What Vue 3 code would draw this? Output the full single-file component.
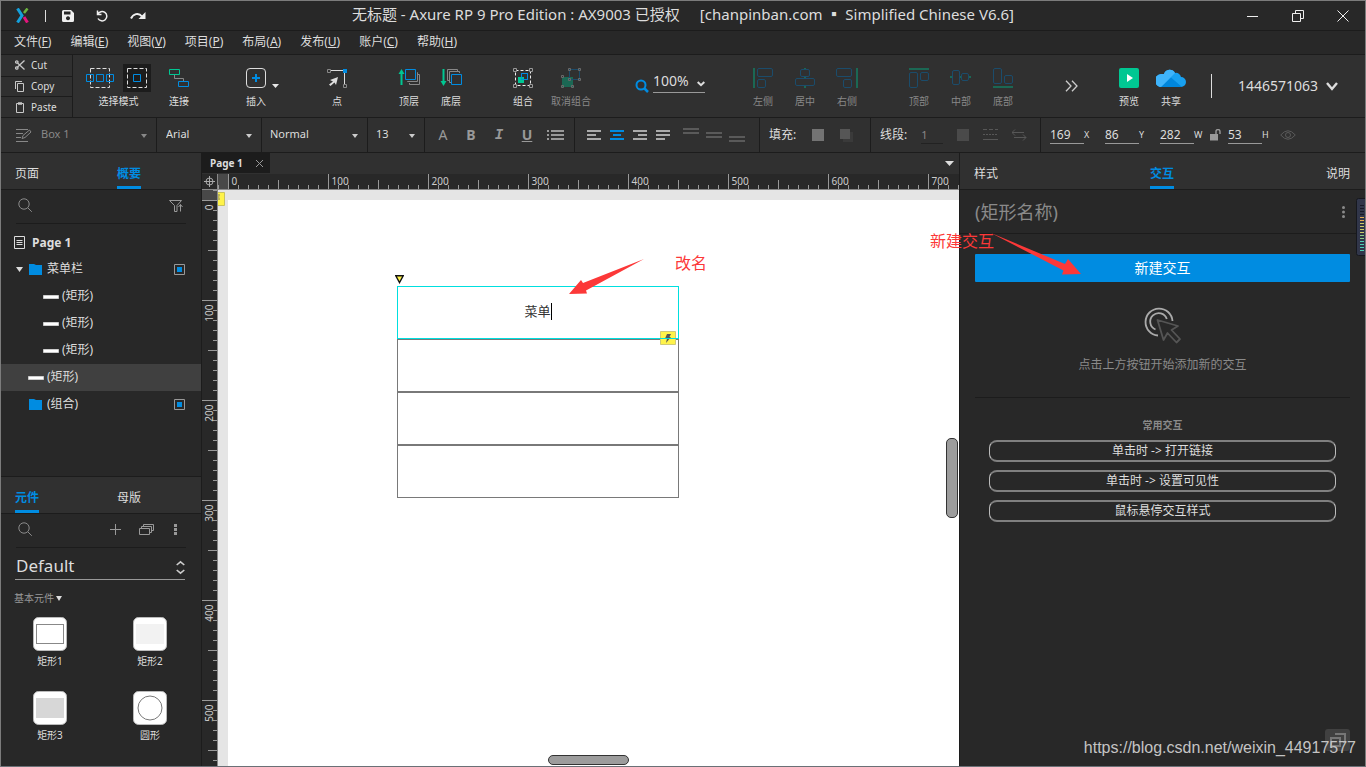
<script setup>
import { computed, onBeforeUnmount, onMounted, ref } from 'vue'

const menus = [
  ['文件', 'F'], ['编辑', 'E'], ['视图', 'V'], ['项目', 'P'],
  ['布局', 'A'], ['发布', 'U'], ['账户', 'C'], ['帮助', 'H']
]

const horizontalAlign = [
  { label: '左侧', bar: 'M1 0v20', boxes: [[4.5, 0.5, 15, 8], [4.5, 11.5, 8, 8]] },
  { label: '居中', bar: 'M10 0v20', boxes: [[5.5, 1.5, 9, 7], [0.5, 10.5, 19, 7]] },
  { label: '右侧', bar: 'M20 0v20', boxes: [[-0.5, 0.5, 15, 8], [6.5, 11.5, 8, 8]] }
]
const verticalAlign = [
  { label: '顶部', bar: 'M0 1h20', boxes: [[0.5, 4.5, 8, 15], [11.5, 4.5, 8, 8]] },
  { label: '中部', bar: 'M-1 9h21', boxes: [[1.5, 2.5, 7, 14], [10.5, 5.5, 7, 7]] },
  { label: '底部', bar: 'M0 19h20', boxes: [[0.5, 0.5, 8, 15], [11.5, 7.5, 8, 8]] }
]

const textAlign = [
  { name: '左对齐', d: 'M0 1h14M0 5h9M0 9h14' },
  { name: '居中对齐', d: 'M0 1h14M3 5h8M0 9h14', on: true },
  { name: '右对齐', d: 'M0 1h14M5 5h9M0 9h14' },
  { name: '两端对齐', d: 'M0 1h14M0 5h14M0 9h9' }
]
const blockAlign = [
  { name: '顶端', d: 'M0 1h16M0 5h16' },
  { name: '居中', d: 'M0 5h16M0 9h16' },
  { name: '底端', d: 'M0 9h16M0 13h16' }
]

const tree = [
  { name: 'Page 1', kind: 'page', depth: 0 },
  { name: '菜单栏', kind: 'folder', depth: 1, open: true, mark: true },
  { name: '(矩形)', kind: 'rect', depth: 2 },
  { name: '(矩形)', kind: 'rect', depth: 2 },
  { name: '(矩形)', kind: 'rect', depth: 2 },
  { name: '(矩形)', kind: 'rect', depth: 1, selected: true },
  { name: '(组合)', kind: 'folder', depth: 1, mark: true }
]

const widgets = [
  { name: '矩形1', kind: 'outline' },
  { name: '矩形2', kind: 'light' },
  { name: '矩形3', kind: 'gray' },
  { name: '圆形', kind: 'circle' }
]

// Ruler marks: one every 10 units, longer at 50, full height with a number at 100.
const stage = ref(null)
const extent = ref({ width: 0, height: 0 })
const ticksFor = (length) =>
  Array.from({ length: Math.max(0, Math.ceil((length - 26) / 10)) }, (_, i) => {
    const value = i * 10
    const size = value % 100 === 0 ? 15 : value % 50 === 0 ? 9 : 4
    return { value, size, pos: value + 10.5 }
  })
const topTicks = computed(() => ticksFor(extent.value.width))
const sideTicks = computed(() => ticksFor(extent.value.height))
const numbered = (ticks, length) => ticks.filter((t) => t.size === 15 && t.pos + 24 < length - 16)

const measure = () => {
  extent.value = { width: stage.value.clientWidth, height: stage.value.clientHeight }
}
onMounted(() => {
  measure()
  window.addEventListener('resize', measure)
})
onBeforeUnmount(() => window.removeEventListener('resize', measure))

const presets = ['单击时 -> 打开链接', '单击时 -> 设置可见性', '鼠标悬停交互样式']
const name = ref('')
const geometry = { x: '169', y: '86', w: '282', h: '53' }
</script>

<template>
  <div class="window">
    <header class="titlebar">
      <div class="quick">
        <svg class="logo" width="13" height="15" viewBox="0 0 13 15" fill="none" stroke-width="3">
          <path d="M1.500.5L6 7.500L1.500 14.500" stroke="#14a0dc" />
          <path d="M8 5L11.500.5" stroke="#6cb33f" stroke-width="2.600" />
          <path d="M8 9L11.500 14.500" stroke="#e4157d" />
        </svg>
        <span class="bar"></span>
        <button class="save" aria-label="保存">
          <svg width="12" height="12" viewBox="0 0 12 12"><path fill="#efefef" fill-rule="evenodd" d="M1.500 0H9l3 3v7.500A1.500 1.500 0 0 1 10.500 12h-9A1.500 1.500 0 0 1 0 10.500v-9A1.500 1.500 0 0 1 1.500 0zM2 1.500v3h6.500v-3zM6 6.200a2 2 0 1 0 .01 0z" /></svg>
        </button>
        <button class="undo" aria-label="撤销">
          <svg width="13" height="12" viewBox="0 0 13 12" fill="none" stroke="#efefef" stroke-width="1.500"><path d="M1.500.5v4h4M1.800 4.300A4.700 4.700 0 1 1 2 8.500" /></svg>
        </button>
        <button class="redo" aria-label="重做">
          <svg width="16" height="9" viewBox="0 0 16 9"><path d="M1 7.500C3 3 8.500 1 12 5.500" fill="none" stroke="#efefef" stroke-width="2" /><path d="M15.500 1v7H8.500z" fill="#efefef" /></svg>
        </button>
      </div>
      <h1 class="title">无标题 - Axure RP 9 Pro Edition : AX9003 已授权<span class="vendor">[chanpinban.com ▪ Simplified Chinese V6.6]</span></h1>
      <div class="controls">
        <button aria-label="最小化"><svg width="12" height="12" viewBox="0 0 12 12"><path d="M0 6.500h11" stroke="#eee" /></svg></button>
        <button aria-label="还原"><svg width="12" height="12" viewBox="0 0 12 12" fill="none" stroke="#eee"><path d="M.5 3.500h8v8h-8zM3.500 3V.5h8v8H9" /></svg></button>
        <button aria-label="关闭"><svg width="12" height="12" viewBox="0 0 12 12"><path d="M.5.5l11 11M11.500.5l-11 11" stroke="#eee" /></svg></button>
      </div>
    </header>

    <nav class="menu">
      <button v-for="m in menus" :key="m[1]">{{ m[0] }}(<u>{{ m[1] }}</u>)</button>
    </nav>

    <div class="toolbar">
      <div class="clipboard">
        <button><svg width="10" height="10" viewBox="0 0 10 10" fill="none" stroke="#c8c8c8" stroke-width="1.300"><path d="M2.500 3L9.500 9.500M2.500 7L9.500.5" /><circle cx="1.800" cy="2" r="1.200" /><circle cx="1.800" cy="8" r="1.200" /></svg>Cut</button>
        <button><svg width="10" height="11" viewBox="0 0 10 11" fill="none" stroke="#c8c8c8"><path d="M2.500 2.500h6v8h-6zM.5 8V.5H7" /></svg>Copy</button>
        <button><svg width="10" height="11" viewBox="0 0 10 11" fill="none" stroke="#c8c8c8"><path d="M1.500 1.500h7v9h-7z" /><path d="M3 1.500h4" stroke-width="2.500" /></svg>Paste</button>
      </div>

      <div class="tool modes">
        <span class="icons">
          <svg width="28" height="28" viewBox="0 0 28 28" fill="none"><path d="M4.500 4.500h19v19h-19z" stroke="#ddd" stroke-dasharray="4 2" /><path d="M.5 10.500h7v7h-7zM10.500 10.500h7v7h-7zM20.500 10.500h7v7h-7z" stroke="#008ce1" /></svg>
          <svg class="active" width="28" height="28" viewBox="0 0 28 28" fill="none"><path d="M4.500 4.500h19v19h-19z" stroke="#ddd" stroke-dasharray="4 2" /><path d="M10.500 10.500h7v7h-7z" stroke="#008ce1" /></svg>
        </span>
        <span>选择模式</span>
      </div>
      <button class="tool connect">
        <svg width="20" height="20" viewBox="0 0 20 20" fill="none"><path d="M5.500 7v3.500h9v3" stroke="#888" /><path d="M.5 1.500h10v5H.5z" stroke="#00c792" /><path d="M9.500 13.500h10v5h-10z" stroke="#008ce1" /></svg>连接
      </button>
      <button class="tool insert">
        <svg width="20" height="20" viewBox="0 0 20 20" fill="none"><rect x=".5" y=".5" width="19" height="19" rx="3.500" stroke="#ddd" /><path d="M10 6v8M6 10h8" stroke="#008ce1" stroke-width="2" /></svg>插入
      </button>
      <svg class="insert-caret" width="8" height="4" viewBox="0 0 8 4"><path d="M0 0h7L3.500 4z" fill="#e8e8e8" /></svg>
      <button class="tool point">
        <svg width="20" height="20" viewBox="0 0 20 20" fill="none"><path d="M4 2.500h12M17.500 4v12" stroke="#ddd" /><path d="M.5 1.500h3v3h-3zM16.500 16.500h3v3h-3z" stroke="#888" /><path d="M16 1h4v4h-4z" fill="#008ce1" /><path d="M11 9L3 12l3 1.500-4 3 1.500 1.500 4-3.500L9 17z" fill="#ddd" /></svg>点
      </button>
      <button class="tool front">
        <svg width="22" height="20" viewBox="0 0 22 20" fill="none"><path d="M3.500 4v13" stroke="#00c792" stroke-width="2" /><path d="M.5 6L3.500 1l3 5z" fill="#00c792" /><path d="M19 4.500h.5v9h-10V13M20 6.500h1.500v10h-10V15" stroke="#888" /><path d="M7.500 1.500h10v10h-10z" stroke="#008ce1" /></svg>顶层
      </button>
      <button class="tool">
        <svg width="22" height="20" viewBox="0 0 22 20" fill="none"><path d="M3.500 1v13" stroke="#00c792" stroke-width="2" /><path d="M.5 13L3.500 18l3-5z" fill="#00c792" /><path d="M9 12.500H7.500v-11h10V3M11 14.500H9.500v-11h10V5" stroke="#888" /><path d="M11.500 6.500h10v10h-10z" stroke="#008ce1" /></svg>底层
      </button>
      <button class="tool group">
        <svg width="20" height="20" viewBox="0 0 20 20" fill="none"><path d="M2.500 2.500h15v15h-15z" stroke="#eee" stroke-dasharray="3 2" /><path d="M5 9h6v6H5z" fill="#00c792" /><path d="M8.500 5.500h6v6h-6z" fill="#303030" stroke="#008ce1" /><path d="M5 9h6v2.500H5z" fill="#00c792" /><path d="M8.500 5.500h6v6h-6z" stroke="#008ce1" /><path d="M.5.500h3v3h-3zM16.500.500h3v3h-3zM.5 16.500h3v3h-3zM16.500 16.500h3v3h-3z" fill="#303030" stroke="#999" /></svg>组合
      </button>
      <button class="tool ungroup dim">
        <svg width="20" height="20" viewBox="0 0 20 20" fill="none"><path d="M1 9h11v10H1z" fill="#1b6854" /><path d="M8.500 1.500h10v10h-10z" stroke="#1b4c6b" /><path d="M7.500.5h2v2h-2zM17.500.500h2v2h-2zM17.500 10.500h2v2h-2zM.5 7.500h2v2h-2zM.5 17.500h2v2h-2zM10.500 17.500h2v2h-2zM7.500 10.500h2v2h-2z" stroke="#6a6a6a" /></svg>取消组合
      </button>

      <div class="zoom">
        <svg width="14" height="14" viewBox="0 0 14 14" fill="none" stroke="#008ce1" stroke-width="2"><circle cx="6" cy="6" r="4.500" /><path d="M9 9l4 4" stroke-width="2.500" /></svg>
        <button class="zoom-value">100%<svg width="8" height="6" viewBox="0 0 8 6" fill="none" stroke="#ddd" stroke-width="2"><path d="M.7 1L4 4.200 7.300 1" /></svg></button>
      </div>

      <div v-for="(set, i) in [horizontalAlign, verticalAlign]" :key="i" class="aligns">
        <button v-for="a in set" :key="a.label" class="tool dim">
          <svg width="22" height="20" viewBox="-1 0 22 20" fill="none"><path :d="a.bar" stroke="#1b6854" stroke-width="2" /><rect v-for="(b, n) in a.boxes" :key="n" :x="b[0]" :y="b[1]" :width="b[2]" :height="b[3]" rx="1.500" fill="#303030" stroke="#1b4c6b" /></svg>{{ a.label }}
        </button>
      </div>

      <button class="more" aria-label="更多"><svg width="13" height="12" viewBox="0 0 13 12" fill="none" stroke="#ccc" stroke-width="1.300"><path d="M1 .7l5 5.300-5 5.300M7 .7l5 5.300-5 5.300" /></svg></button>
      <div class="session">
        <button class="tool">
          <svg width="20" height="20" viewBox="0 0 20 20"><rect width="20" height="20" rx="2" fill="#00c792" /><path d="M8 6l6 4-6 4z" fill="#fff" /></svg>预览
        </button>
        <button class="tool">
          <svg width="30" height="20" viewBox="0 0 30 20"><path d="M6 19a6 6 0 0 1-1-13h3a6 6 0 0 1 11-1 5 5 0 0 1 6 4 5 5 0 0 1 0 10z" fill="#18a0f0" /><path d="M6 19a6 6 0 0 1-1-13h3a6 6 0 0 1 11-1L14 10z" fill="#3fb4fb" /><path d="M5 19L15 9.500 26 19z" fill="#0086dc" /></svg>共享
        </button>
        <span class="divider"></span>
        <button class="account">1446571063<svg width="12" height="9" viewBox="0 0 12 9" fill="none" stroke="#ddd" stroke-width="2.400"><path d="M1 1l5 6 5-6" /></svg></button>
      </div>
    </div>

    <div class="stylebar">
      <div class="cell preset">
        <svg width="16" height="13" viewBox="0 0 16 13" fill="none" stroke="#888"><path d="M0 .5h12M0 4.500h7M0 8.500h5M0 12.500h12M6 9.500l1-3 6.500-5.500 1.500 2L9 8.500z" /></svg>
        <select aria-label="样式"><option>Box 1</option></select>
      </div>
      <div class="cell family"><select aria-label="字体"><option>Arial</option></select></div>
      <div class="cell weight"><select aria-label="字重"><option>Normal</option></select></div>
      <div class="cell size"><select aria-label="字号"><option>13</option></select></div>
      <div class="cell format">
        <button>A</button><button class="b">B</button><button class="i">I</button><button class="u">U</button>
        <button aria-label="项目符号"><svg width="17" height="12" viewBox="0 0 17 12" stroke="#999" stroke-width="2"><path d="M0 2h2M0 6h2M0 10h2M4 2h13M4 6h13M4 10h13" /></svg></button>
      </div>
      <div class="cell alignment">
        <button v-for="a in textAlign" :key="a.name" :class="{ on: a.on }" :aria-label="a.name"><svg width="14" height="10" viewBox="0 0 14 10" stroke="currentColor" stroke-width="2"><path :d="a.d" /></svg></button>
        <span class="vertical">
          <button v-for="a in blockAlign" :key="a.name" :aria-label="a.name"><svg width="16" height="14" viewBox="0 0 16 14" stroke="#5a5a5a" stroke-width="2"><path :d="a.d" /></svg></button>
        </span>
      </div>
      <div class="cell fill">
        <span>填充:</span>
        <svg width="12" height="12"><rect width="12" height="12" fill="#737373" /></svg>
        <svg width="13" height="13"><path d="M3 3h10v10H3z" fill="#3a3a3a" /><path d="M0 0h10v10H0z" fill="#565656" /></svg>
      </div>
      <div class="cell line">
        <span>线段:</span>
        <input aria-label="线宽" value="1" disabled />
        <svg width="12" height="12"><rect width="12" height="12" fill="#4a4a4a" /></svg>
        <svg width="15" height="12" viewBox="0 0 15 12" stroke="#575757"><path d="M0 .5h15" stroke-dasharray="4 2" /><path d="M0 5.500h15" stroke-dasharray="2 1" /><path d="M0 10.500h15" /></svg>
        <svg width="15" height="12" viewBox="0 0 15 12" fill="none" stroke="#575757"><path d="M0 3.500h12M3 .5l-3 3 3 3M2 8.500h12M11 5.500l3 3-3 3" /></svg>
      </div>
      <div class="cell geometry">
        <label><input :value="geometry.x" />X</label>
        <label><input :value="geometry.y" />Y</label>
        <label class="w"><input :value="geometry.w" />W</label>
        <svg class="lock" width="11" height="12" viewBox="0 0 11 12"><path d="M0 5h8v6.500H0z" fill="#999" /><path d="M6 5V2.500a2 2 0 0 1 4 0V5" fill="none" stroke="#999" stroke-width="1.400" /></svg>
        <label class="h"><input :value="geometry.h" />H</label>
        <svg width="16" height="10" viewBox="0 0 16 10" fill="none" stroke="#5a5a5a"><path d="M.7 5Q8-3.500 15.300 5 8 13.500.7 5z" /><circle cx="8" cy="5" r="2.500" /></svg>
      </div>
    </div>

    <main class="workspace">
      <aside class="left">
        <section class="outline">
          <div class="tabs"><button>页面</button><button class="on">概要</button></div>
          <div class="search">
            <svg width="15" height="15" viewBox="0 0 15 15" fill="none" stroke="#8a8a8a"><circle cx="6" cy="6" r="5.200" /><path d="M9.800 9.800l4 4" /></svg>
            <svg class="end" width="14" height="12" viewBox="0 0 14 12" fill="none" stroke="#999"><path d="M.5.500h12L8 5.500v6H5.500v-6zM11.500 11.500V4.500M9.500 7l2-2.500 2 2.500" /></svg>
          </div>
          <ul class="tree">
            <li v-for="(n, i) in tree" :key="i" :class="['depth' + n.depth, n.kind, { selected: n.selected }]">
              <span class="toggle"><svg v-if="n.open" width="7" height="5" viewBox="0 0 7 5"><path d="M0 0h7L3.500 5z" fill="#ddd" /></svg></span>
              <svg v-if="n.kind === 'page'" width="11" height="13" viewBox="0 0 11 13" fill="none" stroke="#ddd"><path d="M.5.500h10v12H.5zM2.500 4.500h6M2.500 6.500h6M2.500 8.500h6" /></svg>
              <svg v-else-if="n.kind === 'folder'" width="13" height="11" viewBox="0 0 13 11"><path d="M0 0h5l2 1h6v10H0z" fill="#008ce1" /></svg>
              <svg v-else width="16" height="4" viewBox="0 0 16 4"><path d="M.5.500h15v3H.5z" fill="#fff" stroke="#ccc" /></svg>
              <span class="label">{{ n.name }}</span>
              <svg v-if="n.mark" class="end" width="11" height="11" viewBox="0 0 11 11"><path d="M.5.500h10v10H.5z" fill="none" stroke="#999" /><path d="M3 3h5v5H3z" fill="#008ce1" /></svg>
            </li>
          </ul>
        </section>
        <section class="library">
          <div class="tabs"><button class="on">元件</button><button>母版</button></div>
          <div class="search">
            <svg width="15" height="15" viewBox="0 0 15 15" fill="none" stroke="#8a8a8a"><circle cx="6" cy="6" r="5.200" /><path d="M9.800 9.800l4 4" /></svg>
            <svg class="end" width="11" height="11" viewBox="0 0 11 11" stroke="#999"><path d="M5.500 0v11M0 5.500h11" /></svg>
            <svg class="stack" width="15" height="12" viewBox="0 0 15 12" fill="none" stroke="#999"><path d="M.5 4.500h10v6H.5zM2.500 4V2.500h10v6H11M4.500 2V.5h10v6H13" /></svg>
            <svg class="dots" width="3" height="11" fill="#999"><path d="M0 0h3v3H0zM0 4h3v3H0zM0 8h3v3H0z" /></svg>
          </div>
          <button class="choose">Default<svg width="9" height="15" viewBox="0 0 9 15" fill="none" stroke="#ccc" stroke-width="1.600"><path d="M.7 5L4.500 1.900 8.300 5M.7 10l3.800 3.100L8.300 10" /></svg></button>
          <button class="category">基本元件<svg width="6" height="5"><path d="M0 0h6L3 5z" fill="#ddd" /></svg></button>
          <div class="widgets">
            <button v-for="w in widgets" :key="w.name">
              <svg width="34" height="34" viewBox="0 0 34 34">
                <rect x=".5" y=".5" width="33" height="33" rx="5" fill="#fff" stroke="#bbb" />
                <rect v-if="w.kind === 'outline'" x="3.500" y="7.500" width="27" height="19" fill="#fff" stroke="#888" />
                <rect v-if="w.kind === 'light'" x="3" y="7" width="28" height="20" fill="#f2f2f2" />
                <rect v-if="w.kind === 'gray'" x="3" y="7" width="28" height="20" fill="#d7d7d7" />
                <circle v-if="w.kind === 'circle'" cx="17" cy="17" r="12" fill="#fff" stroke="#797979" />
              </svg>
              {{ w.name }}
            </button>
          </div>
        </section>
      </aside>

      <section class="center">
        <div class="pages">
          <div class="page-tab">Page 1<button aria-label="关闭页面"><svg width="7" height="7" viewBox="0 0 7 7"><path d="M0 0l7 7M7 0L0 7" stroke="#999" /></svg></button></div>
          <svg width="9" height="5" viewBox="0 0 9 5"><path d="M0 0h9L4.500 5z" fill="#ddd" /></svg>
        </div>
        <div ref="stage" class="stage">
          <div class="corner"><svg width="11" height="11" viewBox="0 0 11 11" fill="none" stroke="#aaa"><circle cx="5.500" cy="5.500" r="3.500" /><path d="M5.500 0v11M0 5.500h11" /></svg></div>
          <svg class="ruler top">
            <rect width="10" height="15" fill="#484848" />
            <path d="M.5 11v4" stroke="#999" />
            <path v-for="t in topTicks" :key="t.value" :d="`M${t.pos} ${15 - t.size}v${t.size}`" stroke="#999" />
            <text v-for="t in numbered(topTicks, extent.width)" :key="t.value" :x="t.pos + 3" y="11">{{ t.value }}</text>
          </svg>
          <svg class="ruler side">
            <rect width="15" height="10" fill="#484848" />
            <path d="M11 .5h4" stroke="#999" />
            <path v-for="t in sideTicks" :key="t.value" :d="`M${15 - t.size} ${t.pos}h${t.size}`" stroke="#999" />
            <text v-for="t in numbered(sideTicks, extent.height)" :key="t.value" :transform="`translate(11 ${t.pos + 4}) rotate(-90)`" text-anchor="end">{{ t.value }}</text>
          </svg>
          <div class="canvas">
            <div class="paper"></div>
            <svg class="flag" width="7" height="14" viewBox="0 0 7 14"><path d="M-1 .5h7.500v13H-1z" fill="#fff34a" stroke="#c9c35e" /><path d="M0 3h2M0 5h1.500M0 7h2" stroke="#776" /></svg>
            <svg class="marker" width="9" height="9" viewBox="0 0 9 9"><path d="M.8.8h7.400L4.500 7.500z" fill="#fff34a" stroke="#111" stroke-width="1.400" /></svg>
            <div class="shapes">
              <div class="shape editing">菜单<i></i></div>
              <div class="shape"></div>
              <div class="shape"></div>
              <div class="shape"></div>
              <svg class="bolt" width="16" height="14" viewBox="0 0 16 14"><path d="M.5.500h15v13H.5z" fill="#fff34a" stroke="#d0ca77" /><path d="M7 3h4L9.500 6H11l-5 6 1-4.500H5z" fill="#555" /><path d="M0 7.500h16" stroke="#00dfdf" /></svg>
            </div>
            <span class="thumb vertical-thumb"></span>
            <span class="thumb horizontal-thumb"></span>
          </div>
        </div>
      </section>

      <aside class="right">
        <div class="tabs spread"><button>样式</button><button class="on">交互</button><button>说明</button></div>
        <div class="name-row">
          <input v-model="name" aria-label="名称" placeholder="(矩形名称)" />
          <svg width="3" height="12" fill="#8a8a8a"><circle cx="1.500" cy="1.500" r="1.500" /><circle cx="1.500" cy="6" r="1.500" /><circle cx="1.500" cy="10.500" r="1.500" /></svg>
        </div>
        <div class="interactions">
          <button class="create">新建交互</button>
          <svg class="click" width="38" height="37" viewBox="0 0 38 37" fill="none" stroke-width="1.800"><path d="M14 28.500A13.500 13.500 0 1 1 28.500 14" stroke="#aaa" /><path d="M11.500 22.500A8.500 8.500 0 1 1 22.800 12" stroke="#aaa" /><path d="M13.500 13l6 20 4-7 9 9.500 3.500-3.500-8.500-9 6.500-4z" stroke="#555" stroke-linejoin="round" /></svg>
          <p>点击上方按钮开始添加新的交互</p>
          <hr />
          <h2>常用交互</h2>
          <div class="presets"><button v-for="p in presets" :key="p">{{ p }}</button></div>
        </div>
        <button class="pop" aria-label="弹出面板"><svg width="16" height="15" viewBox="0 0 16 15" fill="none" stroke="#777" stroke-width="2"><path d="M1 5h9v8H1zM5 1h10v8h-2" /></svg></button>
      </aside>

      <div class="notes">
        <svg class="arrow rename" width="75" height="36" viewBox="0 0 75 36"><path d="M0 35L12 21l2 3L75 0 17 31.500l1 3z" fill="#fc3838" /></svg>
        <span class="note rename-note">改名</span>
        <svg class="arrow create-arrow" width="91" height="43" viewBox="0 0 91 43"><path d="M0 0L74 31l3-5 13 15-19 .5 1.500-4z" fill="#fc3838" /></svg>
        <span class="note create-note">新建交互</span>
        <svg class="meter" width="10" height="58" viewBox="0 0 10 58"><rect x=".5" y=".5" width="12" height="57" rx="2" fill="#31364a" stroke="#16181e" /><path d="M4 7.500h4M4 10.500h4M4 13.500h4M4 16.500h4" stroke="#171a26" /><path d="M4 19.500h4M4 22.500h4" stroke="#e5ac50" /><path d="M4 25.500h4M4 28.500h4M4 31.500h4M4 34.500h4" stroke="#cfca6a" /><path d="M4 37.500h4M4 40.500h4" stroke="#8fcc88" /><path d="M4 43.500h4M4 46.500h4M4 49.500h4M4 52.500h4" stroke="#4fceb5" /></svg>
        <span class="watermark">https://blog.csdn.net/weixin_44917577</span>
      </div>
    </main>
  </div>
</template>

<style>
html, body { margin: 0; background: #282828; }
</style>

<style scoped>
.window {
  box-sizing: border-box;
  min-height: 100vh;
  display: flex;
  flex-direction: column;
  overflow: hidden;
  border: 1px solid #7c7c7c;
  border-bottom-color: #6a7076;
  background: #282828;
  color: #ddd;
  font: 12px/16px "Noto Sans", "Noto Sans CJK SC", sans-serif;
}
.window * { box-sizing: border-box; }
svg { flex: none; display: block; }
button, input, select { margin: 0; padding: 0; border: 0; background: none; color: inherit; font: inherit; border-radius: 0; }
h1, h2, p, ul { margin: 0; padding: 0; font-weight: normal; list-style: none; }

.titlebar { display: grid; grid-template-columns: 1fr auto 1fr; align-items: center; height: 30px; border-bottom: 1px solid #1c1c1c; }
.quick { display: flex; align-items: center; padding-left: 15px; }
.bar { width: 1px; height: 12px; margin: 0 16px; background: #ddd; }
.undo { margin-left: 22px; }
.redo { margin-left: 21px; }
.title { font-size: 15px; line-height: 24px; padding-bottom: 4px; white-space: nowrap; }
.vendor { margin-left: 20px; }
.controls { display: flex; justify-content: flex-end; gap: 33px; padding-right: 16px; }

.menu { display: flex; align-items: center; gap: 19px; height: 24px; padding: 0 0 2px 13px; border-bottom: 1px solid #1c1c1c; }

.toolbar { display: flex; height: 63px; background: #303030; border-bottom: 1px solid #1c1c1c; }
.clipboard { display: grid; grid-template-rows: repeat(3, 1fr); width: 72px; border-right: 1px solid #1c1c1c; font-size: 10px; }
.clipboard button { display: flex; align-items: center; gap: 6px; padding-left: 14px; }
.clipboard button + button { border-top: 1px solid #1c1c1c; }
.tool { display: flex; flex-direction: column; align-items: center; flex: none; gap: 6px; width: 42px; padding-top: 13px; font-size: 10px; line-height: 14px; white-space: nowrap; }
.modes { width: 65px; margin-left: 13px; padding-top: 9px; gap: 2px; }
.icons { display: flex; justify-content: space-between; width: 100%; }
.active { background: #1c1c1c; }
.connect { margin-left: 7px; }
.insert { margin-left: 35px; }
.insert-caret { align-self: center; margin-left: -5px; }
.point { margin-left: 36px; }
.front { margin-left: 30px; }
.group { margin-left: 30px; }
.ungroup { margin-left: 6px; }
.dim { color: #888; }
.zoom { display: flex; align-items: flex-end; gap: 4px; margin-left: 43px; padding-bottom: 24px; }
.zoom-value { display: flex; align-items: center; justify-content: space-between; width: 52px; height: 24px; border-bottom: 1px solid #999; font-size: 14px; }
.zoom-value svg { margin-top: 6px; }
.aligns { display: flex; margin-left: 37px; }
.aligns + .aligns { margin-left: 30px; }
.more { margin-left: 41px; }
.session { display: flex; margin-left: auto; padding-right: 27px; }
.divider { align-self: center; width: 1px; height: 24px; margin: 0 26px 0 19px; background: #ddd; }
.account { display: flex; align-items: center; gap: 8px; font-size: 14px; }

.stylebar { display: flex; height: 35px; background: #303030; border-bottom: 1px solid #1c1c1c; font-size: 11px; }
.cell { display: flex; align-items: center; flex: none; border-right: 1px solid #1c1c1c; }
.cell select { flex: 1; min-width: 0; height: 24px; padding-bottom: 2px; appearance: none; outline: none; }
.preset, .family, .weight, .size { position: relative; }
.preset::after, .family::after, .weight::after, .size::after {
  content: ""; position: absolute; right: 9px; top: 16px; border: 3px solid transparent; border-top: 4px solid #ccc; border-bottom: 0; pointer-events: none;
}
.preset { width: 156px; padding-left: 15px; gap: 9px; color: #888; }
.preset::after { border-top-color: #888; }
.family { width: 105px; padding-left: 9px; }
.weight { width: 106px; padding-left: 8px; }
.size { width: 57px; padding-left: 8px; }
.format { width: 150px; padding-left: 4px; color: #999; font-size: 14px; }
.format button { flex: none; width: 28px; display: flex; align-items: center; justify-content: center; }
.b { font-weight: bold; }
.i { font-family: "Liberation Mono", monospace; font-style: italic; font-weight: bold; }
.u { text-decoration: underline; font-weight: bold; }
.alignment { width: 185px; padding-left: 12px; gap: 9px; color: #aaa; }
.on { color: #008ce1; }
.vertical { display: flex; gap: 7px; margin-left: 4px; }
.fill { width: 111px; padding-left: 9px; gap: 16px; font-size: 12px; }
.line { width: 170px; padding-left: 9px; gap: 14px; font-size: 12px; }
.line input { width: 22px; color: #888; font-size: 11px; border-bottom: 1px solid #222; }
.geometry { flex: 1; padding-left: 9px; border-right: 0; }
.geometry label { display: flex; align-items: center; width: 55px; font-size: 9px; }
.geometry .w { width: 50px; }
.geometry .h { width: 52px; }
.geometry input { width: 34px; border-bottom: 1px solid #999; font-size: 12px; }
.lock { margin-right: 7px; }

.workspace { position: relative; display: flex; flex: 1; min-height: 0; }
.left { display: flex; flex-direction: column; flex: none; width: 201px; border-right: 1px solid #1c1c1c; }
.outline { flex: 1; }
.tabs { display: grid; grid-template-columns: 100px 1fr; column-gap: 2px; justify-items: start; height: 37px; padding-left: 14px; background: #303030; border-bottom: 1px solid #1c1c1c; }
.tabs button { border-top: 3px solid transparent; border-bottom: 3px solid transparent; padding-top: 6px; }
.tabs .on { border-bottom-color: #008ce1; font-weight: bold; }
.spread { display: flex; justify-content: space-between; padding: 0 15px 0 14px; }
.search { display: flex; align-items: center; height: 34px; margin: 0 15px; padding: 0 3px 2px 2px; border-bottom: 1px solid #1c1c1c; }
.end { margin-left: auto; }
.stack { margin-left: 18px; }
.dots { margin: 0 6px 0 20px; }
.tree { padding-top: 5px; }
.tree li { display: flex; align-items: center; height: 27px; padding-right: 16px; }
.toggle { flex: none; width: 28px; padding-left: 15px; }
.tree .page { padding-left: 13px; font-weight: bold; }
.page .toggle { display: none; }
.page .label { margin-left: 7px; padding-bottom: 0; }
.label { margin-left: 5px; padding-bottom: 1px; }
.tree .rect .label { margin-left: 3px; }
.rect .toggle { width: 27px; }
.tree .rect.depth2 { padding-left: 15px; }
.selected { background: #404040; }
.library { border-top: 1px solid #1c1c1c; height: 290px; }
.choose { display: flex; align-items: flex-end; justify-content: space-between; width: 170px; height: 32px; margin-left: 14px; padding: 0 0 1px 1px; border-bottom: 1px solid #999; font-size: 17px; line-height: 24px; }
.choose svg { margin-bottom: 3px; }
.category { display: flex; align-items: center; gap: 2px; margin: 10px 0 0 13px; color: #999; font-size: 10px; }
.widgets { display: grid; grid-template-columns: 98px 102px; grid-auto-rows: 74px; margin-top: 11px; }
.widgets button { display: flex; flex-direction: column; align-items: center; gap: 2px; font-size: 10px; }

.center { display: flex; flex-direction: column; flex: 1; min-width: 0; }
.pages { display: flex; align-items: center; justify-content: space-between; height: 21px; padding-right: 5px; background: #303030; }
.page-tab { display: flex; align-items: center; justify-content: space-between; width: 68px; height: 20px; padding: 0 7px 0 8px; align-self: flex-start; background: #1c1c1c; font-size: 10px; font-weight: bold; }
.stage { display: grid; grid-template-columns: 16px 1fr; grid-template-rows: 16px 1fr; flex: 1; min-height: 0; }
.corner { display: flex; align-items: center; justify-content: center; border-right: 1px solid #888; border-bottom: 1px solid #888; }
.ruler { overflow: hidden; font-size: 10px; }
.ruler text { fill: #ccc; }
.top { width: 100%; height: 16px; border-bottom: 1px solid #888; }
.side { width: 16px; height: 100%; border-right: 1px solid #888; }
.canvas { position: relative; overflow: hidden; padding: 10px 0 0 10px; background: #e5e5e5; }
.paper { height: 100%; background: #fff; }
.flag { position: absolute; left: 0; top: 2px; }
.marker { position: absolute; left: 177px; top: 85px; }
.shapes { position: absolute; left: 179px; top: 96px; width: 282px; }
.shape { display: flex; align-items: center; justify-content: center; height: 53px; border: 1px solid #797979; color: #333; font-size: 13px; }
.editing { padding-bottom: 3px; border-color: #00dfdf; }
.editing i { width: 1px; height: 17px; background: #000; }
.bolt { position: absolute; right: 3px; top: 45px; }
.thumb { position: absolute; border: 1px solid #333; border-radius: 5px; background: #9c9c9c; }
.vertical-thumb { right: 1px; top: 248px; width: 12px; height: 80px; }
.horizontal-thumb { left: 330px; bottom: 1px; width: 81px; height: 10px; }

.right { position: relative; flex: none; width: 406px; border-left: 1px solid #1c1c1c; }
.name-row { display: flex; align-items: center; justify-content: space-between; height: 44px; padding: 0 20px 0 15px; border-bottom: 1px solid #1c1c1c; }
.name-row input { width: 200px; outline: none; font-size: 18px; line-height: 26px; }
.name-row input::placeholder { color: #8a8a8a; opacity: 1; }
.interactions { display: flex; flex-direction: column; align-items: stretch; padding: 20px 15px 0; text-align: center; }
.create { height: 28px; border-radius: 1px; background: #008ce1; color: #fff; font-size: 14px; }
.click { align-self: center; margin-top: 25px; }
.interactions p { margin-top: 13px; color: #8a8a8a; }
.interactions hr { width: 100%; height: 1px; margin: 24px 0 0; border: 0; background: #1c1c1c; }
.interactions h2 { margin-top: 19px; color: #8a8a8a; font-size: 10px; font-weight: bold; }
.presets { display: grid; gap: 8px; margin: 7px 14px 0; }
.presets button { height: 22px; border: solid #808080; border-width: 2px 1px; border-left-color: #bbb; border-right-color: #bbb; border-radius: 8px; line-height: 16px; }
.pop { position: absolute; right: 15px; bottom: 15px; display: flex; align-items: center; justify-content: center; width: 25px; height: 22px; border-radius: 3px; background: #414141; }

.notes { position: absolute; inset: 0; pointer-events: none; }
.notes > * { position: absolute; }
.note { color: #fc3838; font-size: 16px; line-height: 24px; white-space: nowrap; }
.rename { left: 568px; top: 106px; }
.rename-note { left: 674px; top: 98px; }
.create-arrow { right: 283px; top: 80px; }
.create-note { right: 371px; top: 76px; }
.meter { right: -1px; top: 45px; }
.watermark { right: 9px; bottom: 8px; color: #c4c4c4; font: 16px/20px "Liberation Sans", sans-serif; }
</style>
